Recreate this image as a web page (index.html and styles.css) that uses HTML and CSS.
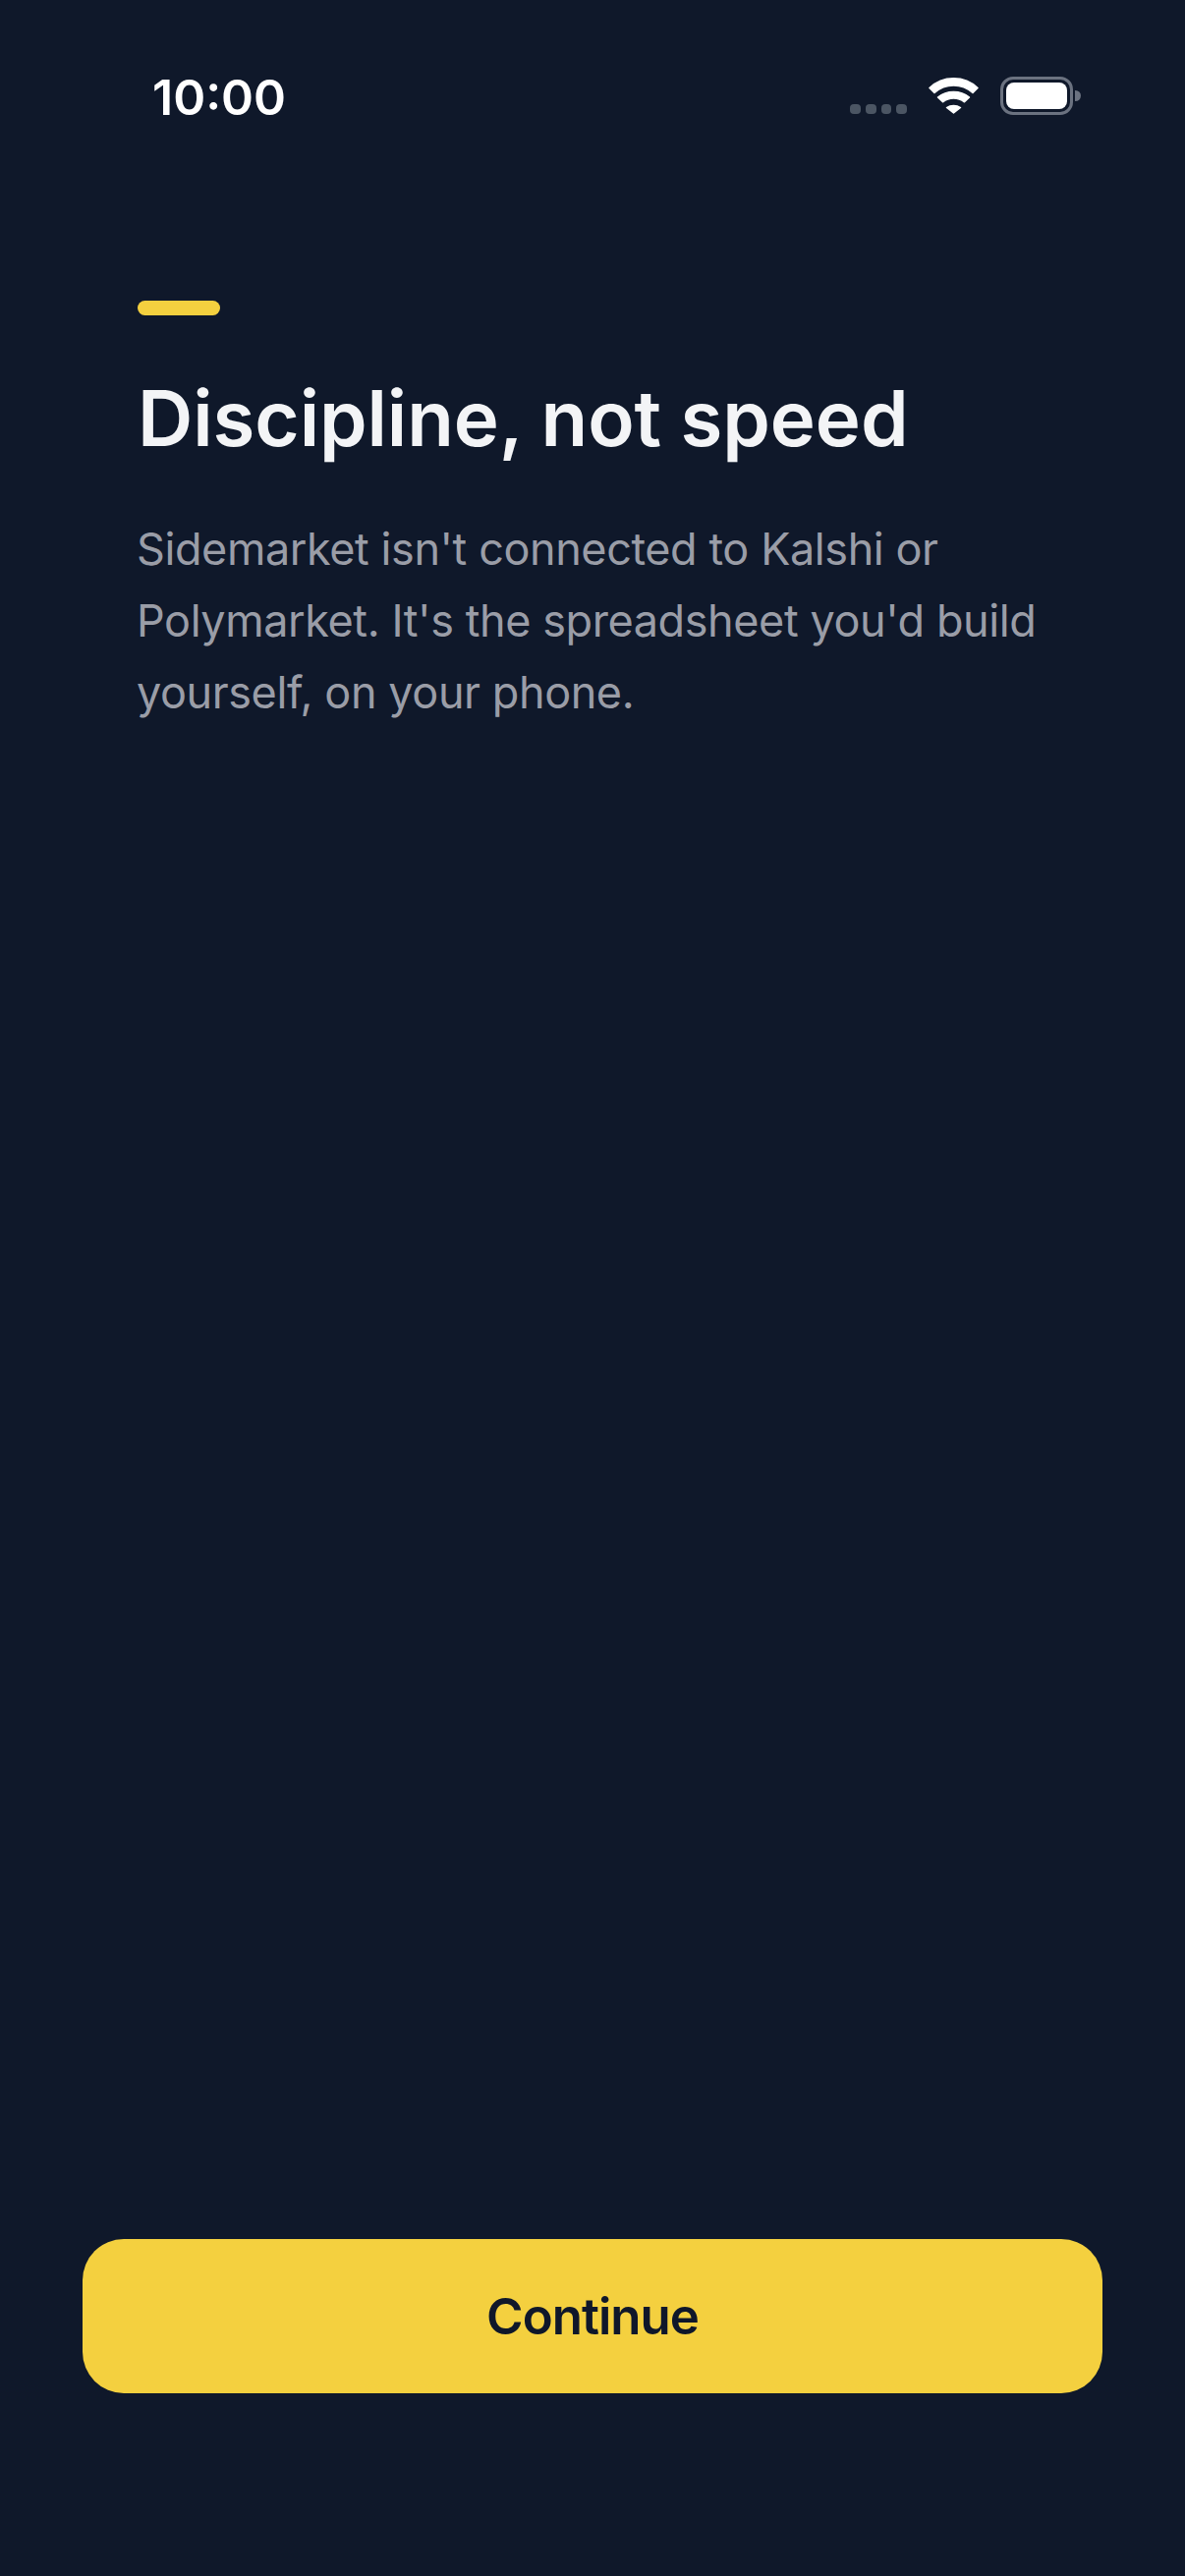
FILE: index.html
```html
<!DOCTYPE html>
<html lang="en">
<head>
    <meta charset="UTF-8">
    <meta name="viewport" content="width=device-width, initial-scale=1.0">
    <title>Sidemarket</title>
    <link rel="stylesheet" href="styles.css">
</head>
<body>
    <div class="screen">
        <!-- status bar -->
        <div class="status-bar">
            <span class="time">10:00</span>
            <div class="status-icons">
                <div class="signal">
                    <span class="dot"></span>
                    <span class="dot"></span>
                    <span class="dot"></span>
                    <span class="dot"></span>
                </div>
                <svg class="wifi" width="51" height="37" viewBox="0 0 51 37">
                    <g fill="#fff" stroke="#fff" stroke-width="1.5" stroke-linejoin="round">
                        <path d="M1 10.5 C14.500 -2.500 36.500 -2.500 50 10.500 L45 15.500 C34 5.500 17 5.500 6 15.500 Z"/>
                        <path d="M9.500 20 C18.500 12.800 32.500 12.800 41.500 20 L36.500 24.800 C30 19.800 21 19.800 14.500 24.800 Z"/>
                        <path d="M18.500 30.500 C22.500 27.800 28.500 27.800 32.500 30.500 L25.500 36 Z"/>
                    </g>
                </svg>
                <div class="battery">
                    <div class="battery-body">
                        <div class="battery-fill"></div>
                    </div>
                    <div class="battery-cap"></div>
                </div>
            </div>
        </div>

        <!-- main copy -->
        <div class="content">
            <div class="accent"></div>
            <h1 class="title">Discipline, not speed</h1>
            <p class="text">Sidemarket isn't connected to Kalshi or Polymarket. It's the spreadsheet you'd build yourself, on your phone.</p>
        </div>

        <div class="footer">
            <button class="button">Continue</button>
        </div>
    </div>
</body>
</html>
```

FILE: styles.css
```css
* {
    box-sizing: border-box;
}

html, body {
    margin: 0;
    padding: 0;
}

body {
    background-color: #0f182a;
    font-family: "Inter", "Liberation Sans", sans-serif;
}

.screen {
    display: flex;
    flex-direction: column;
    width: 1206px;
    height: 2622px;
    background-color: #0f182a;
    overflow: hidden;
}

/* status bar */
.status-bar {
    display: flex;
    justify-content: space-between;
    align-items: flex-start;
    height: 306px;
    padding: 72px 106px 0 155px;
}

.time {
    color: #fff;
    font-size: 50px;
    font-weight: 600;
    line-height: 54px;
}

.status-icons {
    display: flex;
    align-items: flex-start;
    padding-top: 6px;
}

.signal {
    display: flex;
    gap: 5px;
    margin-top: 28px;
    margin-right: 22px;
}

.dot {
    width: 10.750px;
    height: 10px;
    border-radius: 4px;
    background-color: #4b5563;
}

.wifi {
    margin-top: 1px;
    margin-right: 22px;
}

.battery {
    display: flex;
    align-items: center;
}

.battery-body {
    width: 74px;
    height: 39px;
    padding: 3px;
    border: 3px solid #6b7280;
    border-radius: 13px;
}

.battery-fill {
    width: 100%;
    height: 100%;
    border-radius: 8px;
    background-color: #fff;
}

.battery-cap {
    width: 6px;
    height: 11px;
    margin-left: 2px;
    border-radius: 0 6px 6px 0;
    background-color: #6b7280;
}

/* main copy */
.content {
    flex: 1;
    padding: 0 84px 0 140px;
}

.accent {
    width: 84px;
    height: 15px;
    border-radius: 8px;
    background-color: #f4d03f;
}

.title {
    margin: 57px 0 0 0;
    color: #f3f4f6;
    font-size: 78px;
    font-weight: 600;
    line-height: 96px;
    letter-spacing: -0.1px;
}

.text {
    margin: 48px 0 0 -1px;
    color: #9a9da7;
    font-size: 45px;
    font-weight: 400;
    line-height: 73px;
    letter-spacing: -0.42px;
}

/* bottom button */
.footer {
    padding: 0 84px 186px 84px;
}

.button {
    display: block;
    width: 100%;
    height: 157px;
    border: 0;
    border-radius: 42px;
    background-color: #f4d03f;
    color: #0f172a;
    font-family: inherit;
    font-size: 51px;
    font-weight: 600;
    letter-spacing: -1px;
}
```
